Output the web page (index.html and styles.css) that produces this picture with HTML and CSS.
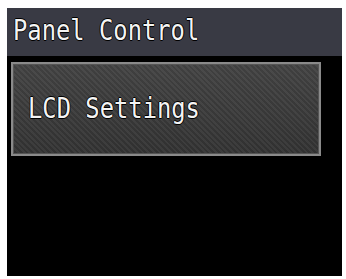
FILE: index.html
```html
<!DOCTYPE html>
<html>
<head>
<meta charset="utf-8">
<link rel="stylesheet" href="styles.css">
</head>
<body>
<div class="screen">
  <div class="header"><span class="label">Panel Control</span></div>
  <div class="content">
    <div class="button"><span class="label">LCD Settings</span></div>
  </div>
</div>
</body>
</html>
```
FILE: styles.css
```css
html, body {
  margin: 0;
  padding: 0;
  background: #ffffff;
}
.screen {
  margin: 8px 0 0 7px;
  width: 335px;
  height: 268px;
  background: #000;
  display: flex;
  flex-direction: column;
  overflow: hidden;
}
.header {
  height: 48px;
  box-sizing: border-box;
  background: #393a44;
  display: flex;
  align-items: center;
  padding: 0 0 2px 6px;
  flex-shrink: 0;
}
.label {
  font-family: "DejaVu Sans Mono", monospace;
  font-size: 28px;
  line-height: 1;
  color: #f4f4f4;
  display: inline-block;
  transform: scaleX(0.85);
  transform-origin: left center;
  white-space: nowrap;
  text-shadow: 1px 0 0 #000, -1px 0 0 #000, 0 1px 0 #000, 0 -1px 0 #000;
}
.content {
  padding: 6px 0 0 4px;
}
.button {
  width: 310px;
  height: 94px;
  box-sizing: border-box;
  border: 2px solid #8a8a8a;
  box-shadow: inset 1px 1px 0 #555, inset -1px -1px 0 #555;
  background:
    repeating-linear-gradient(45deg, rgba(255,255,255,0.04) 0 2px, rgba(0,0,0,0.06) 2px 4px),
    linear-gradient(#444 0%, #3a3a3a 60%, #333 100%);
  display: flex;
  align-items: center;
  padding: 0 0 0 15px;
}
```
